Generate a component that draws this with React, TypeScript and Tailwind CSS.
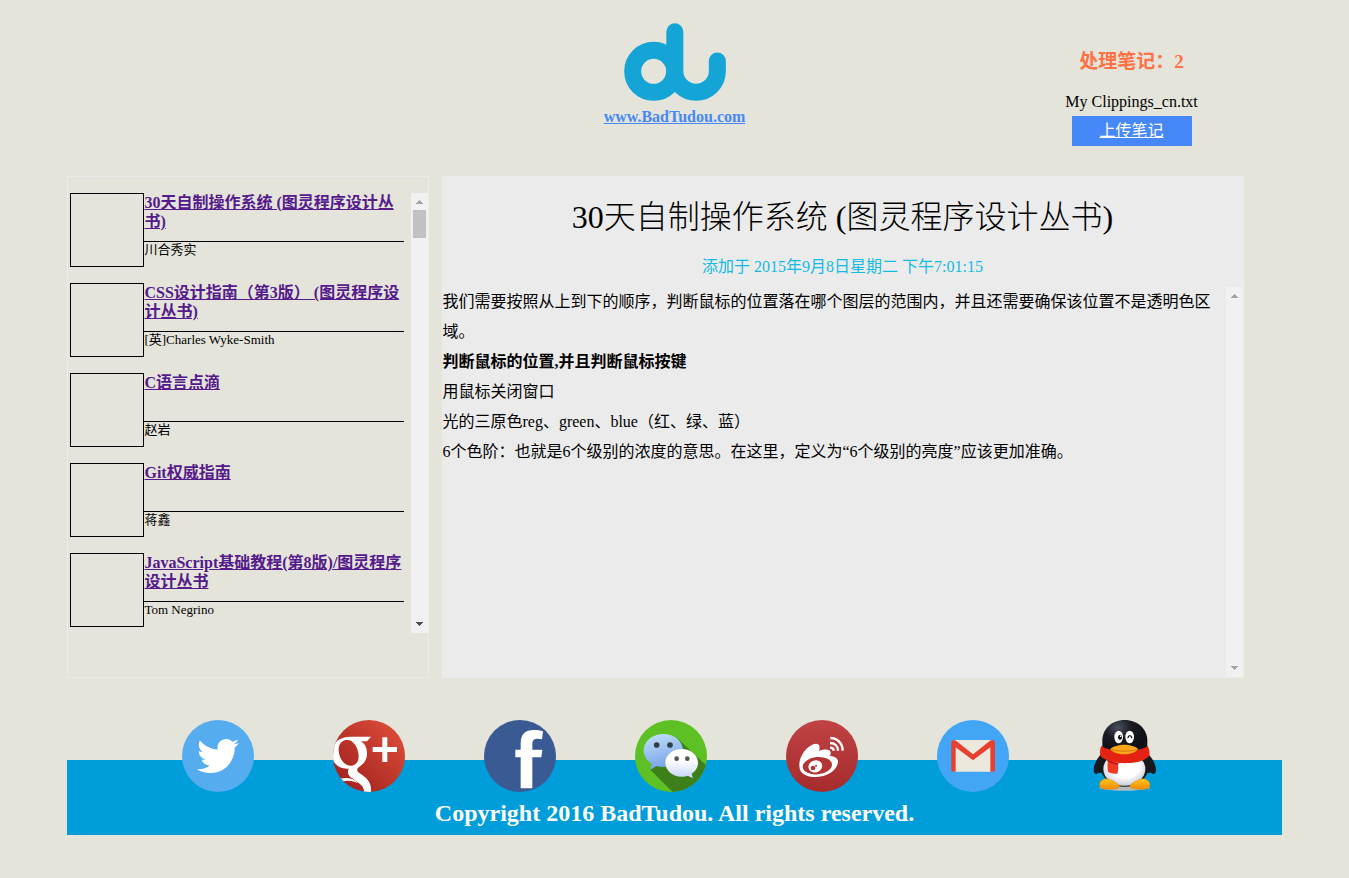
import type { ReactNode } from "react";
import { FaTwitter } from "react-icons/fa";

type Book = { title: string; author: string };

const books: Book[] = [
  { title: "30天自制操作系统 (图灵程序设计丛书)", author: "川合秀实" },
  { title: "CSS设计指南（第3版） (图灵程序设计丛书)", author: "[英]Charles Wyke-Smith" },
  { title: "C语言点滴", author: "赵岩" },
  { title: "Git权威指南", author: "蒋鑫" },
  { title: "JavaScript基础教程(第8版)/图灵程序设计丛书", author: "Tom Negrino" },
];

const notes = [
  { text: "我们需要按照从上到下的顺序，判断鼠标的位置落在哪个图层的范围内，并且还需要确保该位置不是透明色区域。" },
  { text: "判断鼠标的位置,并且判断鼠标按键", bold: true },
  { text: "用鼠标关闭窗口" },
  { text: "光的三原色reg、green、blue（红、绿、蓝）" },
  { text: "6个色阶：也就是6个级别的浓度的意思。在这里，定义为“6个级别的亮度”应该更加准确。" },
];

function Logo() {
  return (
    <svg viewBox="101 39 306 232" className="h-[78px] w-[102px]" aria-hidden="true">
      <g fill="none" stroke="#14a5d6" strokeWidth="51">
        <circle cx="190" cy="183" r="63" />
        <path d="M253.500 64.500V183A63.500 62.500 0 0 0 381 183V152" strokeLinecap="round" />
      </g>
    </svg>
  );
}

function ScrollRail({ thumb = false }: { thumb?: boolean }) {
  return (
    <div className="flex w-[17px] shrink-0 flex-col items-center bg-[#f1f1f1]" aria-hidden="true">
      <svg viewBox="0 0 17 17" className="h-[17px] w-[17px]" fill="#a3a3a3" shapeRendering="crispEdges">
        <path d="M8 7h1v1h1v1h1v1h1v1H5v-1h1V9h1V8h1z" />
      </svg>
      {thumb && <div className="h-7 w-[13px] bg-[#c1c1c1]" />}
      <svg
        viewBox="0 0 17 17"
        className={thumb ? "mt-auto h-[17px] w-[17px] fill-[#505050]" : "mt-auto h-[17px] w-[17px] fill-[#a3a3a3]"}
        shapeRendering="crispEdges"
      >
        <path d="M5 6h7v1h-1v1h-1v1H9v1H8V9H7V8H6V7H5z" />
      </svg>
    </div>
  );
}

function TwitterIcon() {
  return (
    <svg viewBox="0 0 72 72" className="size-[72px]">
      <circle cx="36" cy="36" r="36" fill="#55acee" />
      <FaTwitter x="15" y="15" size={42} color="#fff" />
    </svg>
  );
}

function GooglePlusIcon() {
  return (
    <svg viewBox="489 30 216 216" className="size-[72px]">
      <defs>
        <linearGradient id="gp" x1="1" y1="0" x2="0" y2="1">
          <stop offset="0.1" stopColor="#dc4b38" />
          <stop offset="0.85" stopColor="#a32420" />
        </linearGradient>
        <clipPath id="gpClip">
          <circle cx="597" cy="138" r="108" />
        </clipPath>
      </defs>
      <circle cx="597" cy="138" r="108" fill="url(#gp)" />
      <g fill="#fff" clipPath="url(#gpClip)">
        <path
          fillRule="evenodd"
          d="M603 80H540C505 80 485 103 485 131C485 160 508 178 536 176C531 187 534 195 544 203C563 217 584 226 582 247H603C605 224 597 210 577 195C560 184 557 180 567 171C586 159 592 145 591 126C590 111 584 101 573 94H591ZM529 90C549 87 565 112 566 137C567 155 557 167 542 167C522 167 506 143 506 119C506 102 515 92 529 90Z"
        />
        <path d="M508 207C532 201 551 205 564 220C548 211 532 210 514 216Z" />
        <path d="M637 82H652V111H681V126H652V156H637V126H608V111H637Z" />
      </g>
    </svg>
  );
}

function FacebookIcon() {
  return (
    <svg viewBox="42 30 216 216" className="size-[72px]">
      <circle cx="150" cy="138" r="108" fill="#395a93" />
      <path
        fill="#fff"
        d="M152 235V142H136V119H152V101C152 72 166 60 191 60C202 60 212 61 219 64L216 88C204 85 187 83 187 102V119H217L214 142H187V235Z"
      />
    </svg>
  );
}

function WeChatIcon() {
  return (
    <svg viewBox="495 30 216 216" className="size-[72px]">
      <defs>
        <linearGradient id="wcBlue" x1="0" y1="0" x2="0.3" y2="1">
          <stop offset="0" stopColor="#c3e2fa" />
          <stop offset="1" stopColor="#79a5e8" />
        </linearGradient>
        <linearGradient id="wcWhite" x1="0" y1="0" x2="0" y2="1">
          <stop offset="0.4" stopColor="#fff" />
          <stop offset="1" stopColor="#c4d3f4" />
        </linearGradient>
        <clipPath id="wcClip">
          <circle cx="603" cy="138" r="108" />
        </clipPath>
      </defs>
      <circle cx="603" cy="138" r="108" fill="#5dc126" />
      <path clipPath="url(#wcClip)" fill="#3d7f18" d="M541 179L608 246H711V168L622 85Z" />
      <path
        fill="url(#wcBlue)"
        d="M580 72C613 72 639 94 639 121C639 149 613 171 580 171C573 171 566 170 559 168L541 179L545 161C530 152 521 137 521 121C521 94 547 72 580 72Z"
      />
      <path
        fill="url(#wcWhite)"
        d="M635 117C662 117 684 135 684 158C684 172 676 184 665 191L669 205L653 197C648 199 641 200 635 200C608 200 586 181 586 158C586 135 608 117 635 117Z"
      />
      <g fill="#303f45">
        <circle cx="560" cy="105" r="8.500" />
        <circle cx="600" cy="105" r="8.500" />
        <circle cx="620" cy="146" r="7" fill="#555" />
        <circle cx="652" cy="146" r="7" fill="#555" />
      </g>
    </svg>
  );
}

function WeiboIcon() {
  return (
    <svg viewBox="48 30 216 216" className="size-[72px]">
      <defs>
        <linearGradient id="wb" x1="0" y1="0" x2="0" y2="1">
          <stop offset="0" stopColor="#c14344" />
          <stop offset="1" stopColor="#a52b2d" />
        </linearGradient>
      </defs>
      <circle cx="156" cy="138" r="108" fill="url(#wb)" />
      <path
        fill="#fff"
        d="M88 164C88 145 100 123 116 111C128 101 141 98 146 104C150 109 149 116 147 123C157 119 170 117 178 121C183 124 183 131 180 138C193 139 204 143 204 155C203 174 185 191 160 198C134 205 103 201 92 184C89 178 88 171 88 164Z"
      />
      <ellipse cx="142" cy="167" rx="44" ry="26" fill="#b33436" transform="rotate(-6 142 167)" />
      <ellipse cx="136" cy="169" rx="21" ry="18" fill="#fff" transform="rotate(-20 136 169)" />
      <circle cx="129" cy="174" r="7" fill="#b33436" />
      <circle cx="138" cy="167" r="3" fill="#b33436" />
      <g fill="none" stroke="#fff" strokeWidth="7">
        <path d="M181 84C202 84 218 100 218 122" />
        <path d="M180 99C194 99 204 108 204 122" />
        <path d="M180 113C187 113 191 116 191 122" />
      </g>
    </svg>
  );
}

function GmailIcon() {
  return (
    <svg viewBox="501 30 216 216" className="size-[72px]">
      <circle cx="609" cy="138" r="108" fill="#42a5f5" />
      <path fill="#ece9dc" d="M550 90H669V185H550Z" />
      <path
        fill="#e8402f"
        d="M544 98C544 91 551 88 558 92L609 133L660 92C667 88 675 91 675 98V180C675 183 672 185 669 185H661V112L609 151L557 112V185H550C547 185 544 183 544 180Z"
      />
    </svg>
  );
}

function QQIcon() {
  return (
    <svg viewBox="24 30 216 216" className="size-[72px]">
      <defs>
        <radialGradient id="qqHead" cx="0.35" cy="0.2" r="0.6">
          <stop offset="0" stopColor="#4a4f5c" />
          <stop offset="0.5" stopColor="#1a1c22" />
          <stop offset="1" stopColor="#101116" />
        </radialGradient>
        <radialGradient id="qqBelly" cx="0.5" cy="0.4" r="0.6">
          <stop offset="0.6" stopColor="#fff" />
          <stop offset="1" stopColor="#c9ccd6" />
        </radialGradient>
        <linearGradient id="qqFoot" x1="0" y1="0" x2="0" y2="1">
          <stop offset="0" stopColor="#ffc61e" />
          <stop offset="1" stopColor="#f18a00" />
        </linearGradient>
      </defs>
      <ellipse cx="134" cy="233" rx="76" ry="9" fill="#b7bcc0" />
      <path
        fill="#17191f"
        d="M68 126C50 146 41 164 41 181C42 192 48 195 55 188L82 190V130ZM200 126C219 146 228 164 228 181C227 192 221 195 214 188L186 190V130Z"
      />
      <ellipse cx="134" cy="170" rx="72" ry="60" fill="#17191f" />
      <ellipse cx="133" cy="177" rx="63" ry="50" fill="url(#qqBelly)" />
      <path
        fill="url(#qqFoot)"
        stroke="#c96d00"
        strokeWidth="1"
        d="M58 224C58 211 76 203 88 208C101 213 117 222 119 229C116 239 86 239 72 237C64 236 58 231 58 224ZM210 224C210 211 192 203 180 208C167 213 151 222 149 229C152 239 182 239 196 237C204 236 210 231 210 224Z"
      />
      <path fill="url(#qqHead)" d="M134 30C174 30 202 58 202 92V116C198 133 166 143 134 143C102 143 70 133 67 116V92C67 58 94 30 134 30Z" />
      <ellipse cx="116" cy="81" rx="13" ry="19" fill="#fff" />
      <ellipse cx="149" cy="81" rx="13" ry="19" fill="#fff" />
      <ellipse cx="120" cy="82" rx="6" ry="8" fill="#111" />
      <circle cx="122" cy="79" r="2.500" fill="#fff" />
      <path d="M144 83C146 75 153 75 155 83" fill="none" stroke="#111" strokeWidth="4" strokeLinecap="round" />
      <path fill="#e42312" d="M64 108C90 128 178 128 203 108C207 116 210 128 208 137C186 167 84 167 61 137C59 127 60 116 64 108Z" />
      <path fill="#f03a22" d="M84 151L113 158C116 170 115 182 112 191C104 192 93 190 84 186C82 174 82 162 84 151Z" />
      <path fill="#b5170d" d="M82 149C93 155 106 159 116 160L114 164C102 163 91 159 82 154Z" />
      <path fill="#f9a61a" d="M90 117C98 109 117 104 133 104C149 104 167 109 175 117C168 127 151 133 133 133C115 133 97 127 90 117Z" />
      <path d="M91 118C108 125 157 125 174 118" fill="none" stroke="#c46f0a" strokeWidth="2.500" />
    </svg>
  );
}

const socials: { name: string; icon: ReactNode }[] = [
  { name: "Twitter", icon: <TwitterIcon /> },
  { name: "Google+", icon: <GooglePlusIcon /> },
  { name: "Facebook", icon: <FacebookIcon /> },
  { name: "WeChat", icon: <WeChatIcon /> },
  { name: "Weibo", icon: <WeiboIcon /> },
  { name: "Gmail", icon: <GmailIcon /> },
  { name: "QQ", icon: <QQIcon /> },
];

export default function App() {
  return (
    <div className="min-h-screen bg-[#e4e4db] font-['Liberation_Serif','Noto_Sans_CJK_SC',serif] text-base text-black">
      <div className="mx-auto w-[90%]">
        <header className="grid h-44 grid-cols-[300px_1fr_300px]">
          <div className="col-start-2 flex flex-col items-center pt-[23px]">
            <Logo />
            <a href="#home" className="mt-[6px] text-base leading-5 font-bold text-[#4688f7] underline">
              www.BadTudou.com
            </a>
          </div>
          <div className="flex flex-col items-center pt-[50px]">
            <h3 className="text-[19px] leading-6 font-bold text-[#ff7144]">处理笔记：2</h3>
            <p className="mt-[18px] leading-5">My Clippings_cn.txt</p>
            <a href="#upload" className="mt-1 block w-[120px] bg-[#4688fa] text-center leading-[30px] text-white underline">
              上传笔记
            </a>
          </div>
        </header>

        <main className="flex gap-[13px]">
          <aside className="h-[502px] w-[362px] shrink-0 border border-[#ebebeb] pt-4 pl-[2px]">
            <div className="flex h-[440px]">
              <ul className="flex flex-1 flex-col gap-4">
                {books.map((book) => (
                  <li key={book.title} className="flex">
                    <div className="size-[74px] shrink-0 border border-black" />
                    <div className="w-[261px]">
                      <h4 className="h-12 text-base leading-[19px] font-bold">
                        <a href="#book" className="text-[#551a8b] underline">
                          {book.title}
                        </a>
                      </h4>
                      <p className="mr-px border-t border-black text-[13px] leading-4">{book.author}</p>
                    </div>
                  </li>
                ))}
              </ul>
              <ScrollRail thumb />
            </div>
          </aside>

          <section className="mr-[38px] flex h-[502px] flex-1 flex-col border-y border-r border-[#ebebeb] bg-[#ebebeb]">
            <h1 className="pt-5 text-center text-[32px] leading-10 font-light">30天自制操作系统 (图灵程序设计丛书)</h1>
            <p className="mt-5 text-center leading-5 text-[#12bbe2]">添加于 2015年9月8日星期二 下午7:01:15</p>
            <div className="mt-[10px] flex flex-1">
              <div className="flex-1 leading-[30px]">
                {notes.map((note) => (
                  <p key={note.text} className={note.bold ? "font-bold" : ""}>
                    {note.text}
                  </p>
                ))}
              </div>
              <ScrollRail />
            </div>
          </section>
        </main>

        <footer className="mt-[82px] h-[75px] bg-[#009ddb]">
          <nav className="flex justify-center gap-[79px] pr-[7px]">
            {socials.map((s) => (
              <a key={s.name} href="#social" aria-label={s.name} className="-mt-10 block shrink-0">
                {s.icon}
              </a>
            ))}
          </nav>
          <p className="mt-[7px] text-center text-2xl leading-7 font-bold text-white">
            Copyright 2016 BadTudou. All rights reserved.
          </p>
        </footer>
      </div>
    </div>
  );
}
